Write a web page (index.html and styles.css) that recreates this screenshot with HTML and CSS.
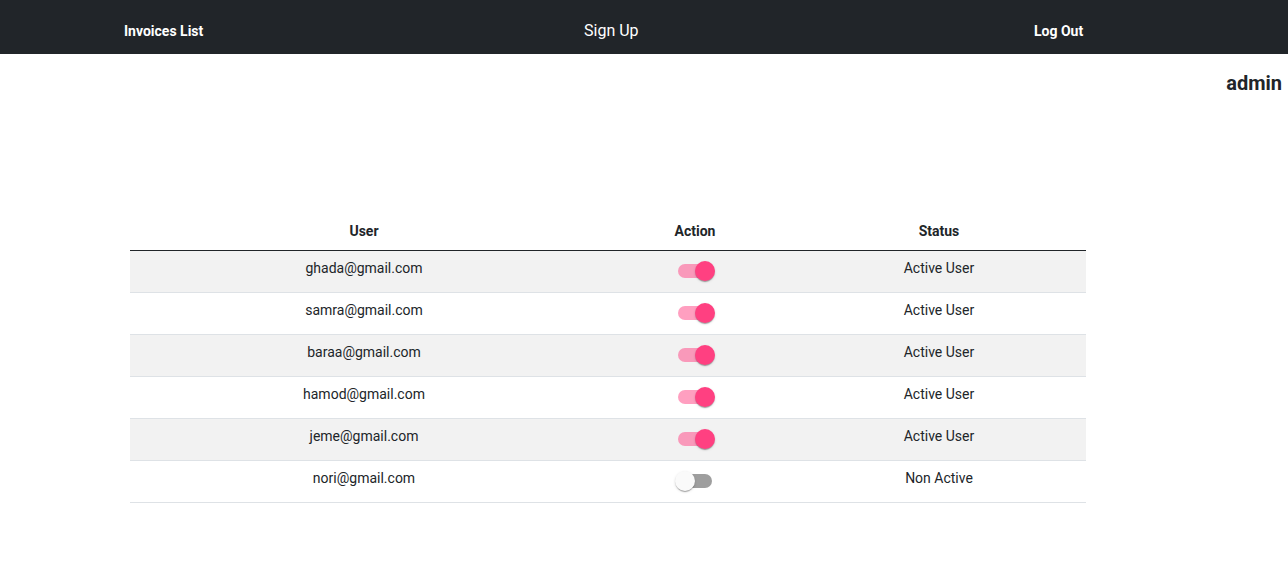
FILE: index.html
```html
<!DOCTYPE html>
<html>
<head>
<meta charset="utf-8">
<link rel="stylesheet" href="styles.css">
</head>
<body>
<nav class="navbar">
  <a class="nav-link bold" href="#">Invoices List</a>
  <a class="nav-link big" href="#">Sign Up</a>
  <a class="nav-link bold" href="#">Log Out</a>
</nav>
<h3 class="username">admin</h3>
<div class="table-wrap">
  <table class="users">
    <thead>
      <tr>
        <th class="col-user">User</th>
        <th class="col-action">Action</th>
        <th class="col-status">Status</th>
      </tr>
    </thead>
    <tbody>
      <tr class="odd">
        <td><div class="cell-text">ghada@gmail.com</div></td>
        <td class="switch-cell"><span class="switch on"><span class="track"></span><span class="thumb"></span></span></td>
        <td><div class="cell-text">Active User</div></td>
      </tr>
      <tr>
        <td><div class="cell-text">samra@gmail.com</div></td>
        <td class="switch-cell"><span class="switch on"><span class="track"></span><span class="thumb"></span></span></td>
        <td><div class="cell-text">Active User</div></td>
      </tr>
      <tr class="odd">
        <td><div class="cell-text">baraa@gmail.com</div></td>
        <td class="switch-cell"><span class="switch on"><span class="track"></span><span class="thumb"></span></span></td>
        <td><div class="cell-text">Active User</div></td>
      </tr>
      <tr>
        <td><div class="cell-text">hamod@gmail.com</div></td>
        <td class="switch-cell"><span class="switch on"><span class="track"></span><span class="thumb"></span></span></td>
        <td><div class="cell-text">Active User</div></td>
      </tr>
      <tr class="odd">
        <td><div class="cell-text">jeme@gmail.com</div></td>
        <td class="switch-cell"><span class="switch on"><span class="track"></span><span class="thumb"></span></span></td>
        <td><div class="cell-text">Active User</div></td>
      </tr>
      <tr>
        <td><div class="cell-text">nori@gmail.com</div></td>
        <td class="switch-cell"><span class="switch"><span class="track"></span><span class="thumb"></span></span></td>
        <td><div class="cell-text">Non Active</div></td>
      </tr>
    </tbody>
  </table>
</div>
</body>
</html>
```
FILE: styles.css
```css
* { box-sizing: border-box; }
html, body {
  margin: 0;
  padding: 0;
  background: #fff;
  font-family: Roboto, "Liberation Sans", sans-serif;
  color: #212529;
}
.navbar {
  height: 54px;
  background: #212529;
  display: grid;
  grid-template-columns: 460px 450px auto;
  align-items: baseline;
  padding: 21px 0 0 124px;
  line-height: 20px;
}
.nav-link {
  color: #fff;
  text-decoration: none;
  font-size: 14px;
  justify-self: start;
}
.nav-link.bold { font-weight: 700; }
.nav-link.big { font-size: 16px; font-weight: 400; }
.username {
  margin: 17px 6px 0 0;
  text-align: right;
  font-size: 20px;
  line-height: 24px;
  font-weight: 700;
  color: #212529;
}
.table-wrap {
  padding: 119px 0 0 130px;
}
.users {
  width: 956px;
  border-collapse: collapse;
  font-size: 14px;
  line-height: 20px;
}
.users th {
  font-weight: 700;
  text-align: center;
  padding: 7px 0 9px;
  color: #212529;
  border-bottom: 1px solid #212529;
}
.col-user { width: 468px; }
.col-action { width: 194px; }
.col-status { width: 294px; }
.users td {
  padding: 0;
  vertical-align: top;
  text-align: center;
  border-bottom: 1px solid #dee2e6;
  color: #212529;
}
.users tr.odd td { background: #f2f2f2; }
.cell-text { padding-top: 7px; }
.users td.switch-cell { padding: 1px 0 2px; }
.switch {
  position: relative;
  display: inline-block;
  width: 58px;
  height: 38px;
  margin-left: -1px;
  vertical-align: top;
}
.track {
  position: absolute;
  left: 12px;
  top: 12px;
  width: 34px;
  height: 14px;
  border-radius: 7px;
  background: #000;
  opacity: 0.38;
}
.thumb {
  position: absolute;
  left: 9px;
  top: 9px;
  width: 20px;
  height: 20px;
  border-radius: 50%;
  background: #fafafa;
  box-shadow: 0 2px 1px -1px rgba(0,0,0,0.2), 0 1px 1px 0 rgba(0,0,0,0.14), 0 1px 3px 0 rgba(0,0,0,0.12);
}
.switch.on .track {
  background: #ff4081;
  opacity: 0.5;
}
.switch.on .thumb {
  left: 29px;
  background: #ff4081;
}
```
